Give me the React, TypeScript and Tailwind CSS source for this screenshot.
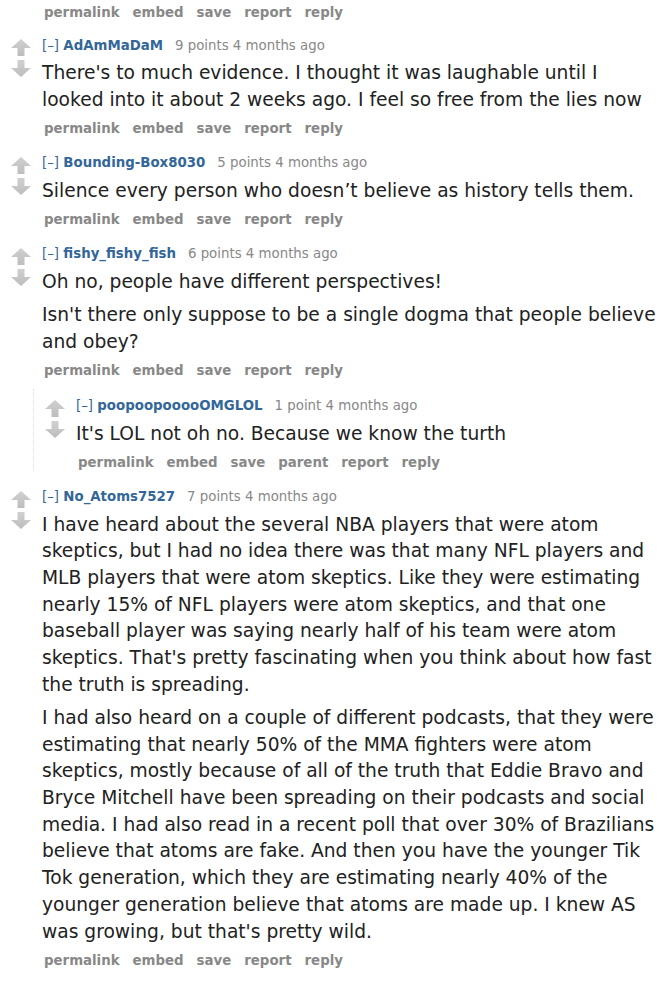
import React from "react";

const F = { fontFamily: '"DejaVu Sans", Verdana, sans-serif' };

function Arrows() {
  return (
    <div className="flex flex-col w-[20px] pt-[2.5px]">
      <svg width="20" height="17" viewBox="0 0 20 17">
        <defs>
          <linearGradient id="ga" x1="0" y1="0" x2="0" y2="1">
            <stop offset="0" stopColor="#d0d0d0" />
            <stop offset="1" stopColor="#bdbdbd" />
          </linearGradient>
        </defs>
        <path d="M10 0 L20 9 L13.5 9 L13.5 17 L6.5 17 L6.5 9 L0 9 Z" fill="url(#ga)" />
      </svg>
      <svg width="20" height="17" viewBox="0 0 20 17" className="mt-[4px]">
        <path d="M6.5 0 L13.5 0 L13.5 8 L20 8 L10 17 L0 8 L6.5 8 Z" fill="url(#ga)" />
      </svg>
    </div>
  );
}

function Buttons({ parent }: { parent?: boolean }) {
  const items = parent
    ? ["permalink", "embed", "save", "parent", "report", "reply"]
    : ["permalink", "embed", "save", "report", "reply"];
  return (
    <div className="flex gap-[13px] pl-[2px] text-[13.33px] leading-[17px] font-bold text-[#888]">
      {items.map((i) => (
        <span key={i}>{i}</span>
      ))}
    </div>
  );
}

function Comment({
  user,
  points,
  paras,
  parent,
  children,
}: {
  user: string;
  points: string;
  paras: string[][];
  parent?: boolean;
  children?: React.ReactNode;
}) {
  return (
    <div>
      <div className="flex">
        <div className="w-[42px] pl-[11px] shrink-0">
          <Arrows />
        </div>
        <div className="flex-1">
          <div className="text-[13.33px] leading-[17px] text-[#888] whitespace-nowrap">
            <span className="text-[#369]">[–]</span>{" "}
            <span className="text-[#369] font-bold">{user}</span>
            <span className="ml-[12px]">{points} 4 months ago</span>
          </div>
          <div className="text-[18.67px] leading-[26.67px] text-[#222]">
            {paras.map((p, i) => (
              <div key={i} className="my-[6.67px]">
                {p.map((l, j) => (
                  <div key={j} className="whitespace-nowrap">
                    {l}
                  </div>
                ))}
              </div>
            ))}
          </div>
          <div className="mt-[2px]">
            <Buttons parent={parent} />
          </div>
        </div>
      </div>
      {children}
    </div>
  );
}

export default function App() {
  return (
    <div className="w-[660px] h-[1000px] overflow-hidden bg-white" style={F}>
      <div className="mt-[3.5px] pl-[42px]">
        <Buttons />
      </div>
      <div className="flex flex-col gap-[17px] mt-[16px]">
        <Comment
          user="AdAmMaDaM"
          points="9 points"
          paras={[
            [
              "There's to much evidence. I thought it was laughable until I",
              "looked into it about 2 weeks ago. I feel so free from the lies now",
            ],
          ]}
        />
        <Comment
          user="Bounding-Box8030"
          points="5 points"
          paras={[["Silence every person who doesn’t believe as history tells them."]]}
        />
        <Comment
          user="fishy_fishy_fish"
          points="6 points"
          paras={[
            ["Oh no, people have different perspectives!"],
            ["Isn't there only suppose to be a single dogma that people believe", "and obey?"],
          ]}
        >
          <div className="ml-[33px] mt-[10px] pt-[8px] pb-0 border-l border-dotted border-[#dde]">
            <Comment
              user="poopoopooooOMGLOL"
              points="1 point"
              parent
              paras={[["It's LOL not oh no. Because we know the turth"]]}
            />
          </div>
        </Comment>
        <Comment
          user="No_Atoms7527"
          points="7 points"
          paras={[
            [
              "I have heard about the several NBA players that were atom",
              "skeptics, but I had no idea there was that many NFL players and",
              "MLB players that were atom skeptics. Like they were estimating",
              "nearly 15% of NFL players were atom skeptics, and that one",
              "baseball player was saying nearly half of his team were atom",
              "skeptics. That's pretty fascinating when you think about how fast",
              "the truth is spreading.",
            ],
            [
              "I had also heard on a couple of different podcasts, that they were",
              "estimating that nearly 50% of the MMA fighters were atom",
              "skeptics, mostly because of all of the truth that Eddie Bravo and",
              "Bryce Mitchell have been spreading on their podcasts and social",
              "media. I had also read in a recent poll that over 30% of Brazilians",
              "believe that atoms are fake. And then you have the younger Tik",
              "Tok generation, which they are estimating nearly 40% of the",
              "younger generation believe that atoms are made up. I knew AS",
              "was growing, but that's pretty wild.",
            ],
          ]}
        />
      </div>
    </div>
  );
}
